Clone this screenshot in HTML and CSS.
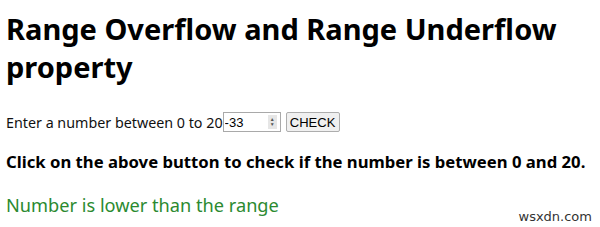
FILE: index.html
```html
<!DOCTYPE html>
<html lang="en">
<head>
    <meta charset="UTF-8">
    <title>Range Overflow and Range Underflow property</title>
    <link rel="stylesheet" href="styles.css">
</head>
<body>
    <h1>Range Overflow and Range Underflow property</h1>
    <div class="row">
        <span>Enter a number between 0 to 20</span>
        <span class="num-box">
            <input type="number" id="num" min="0" max="20" value="-33">
            <span class="spin"><i>&#9650;</i><i>&#9660;</i></span>
        </span>
        <button class="check-btn" onclick="checkNum()">CHECK</button>
    </div>
    <h3>Click on the above button to check if the number is between 0 and 20.</h3>
    <div id="result" class="result">Number is lower than the range</div>
    <div class="mark">wsxdn.com</div>

    <script>
        function checkNum() {
            const el = document.getElementById('num');
            const res = document.getElementById('result');
            if (el.validity.rangeUnderflow) {
                res.textContent = 'Number is lower than the range';
            } else if (el.validity.rangeOverflow) {
                res.textContent = 'Number is higher than the range';
            } else {
                res.textContent = 'Number is in the range';
            }
        }
    </script>
</body>
</html>
```

FILE: styles.css
```css
body {
    font-family: 'Noto Sans', sans-serif;
    margin: 8px 6px;
    color: #000;
    background: #fff;
}

h1 {
    font-size: 29px;
    line-height: 38px;
    margin: 2px 0 26px;
    font-weight: bold;
}

.row {
    display: flex;
    align-items: center;
    height: 20px;
    font-size: 14.3px;
    color: #111;
}

.num-box {
    display: flex;
    align-items: center;
    width: 56px;
    height: 18px;
    border: 1px solid #a9a9a9;
    background: #fff;
}

.num-box input {
    width: 40px;
    border: none;
    outline: none;
    padding: 0 0 0 1px;
    font-family: 'Liberation Sans', sans-serif;
    font-size: 13px;
    -moz-appearance: textfield;
}

.num-box input::-webkit-inner-spin-button,
.num-box input::-webkit-outer-spin-button {
    -webkit-appearance: none;
    margin: 0;
}

.spin {
    display: flex;
    flex-direction: column;
    justify-content: center;
    align-items: center;
    width: 9px;
    height: 14px;
    margin-left: 3px;
    background: #e6e6e6;
}

.spin i {
    font-style: normal;
    font-size: 5px;
    line-height: 5px;
    color: #555;
}

.check-btn {
    margin-left: 5px;
    height: 20px;
    width: 54px;
    padding: 0;
    font-family: 'Liberation Sans', sans-serif;
    font-size: 13px;
    color: #000;
    background: #f0f0f0;
    border: 1px solid #adadad;
    border-radius: 2px;
}

h3 {
    font-size: 16.7px;
    line-height: 20px;
    margin: 20px 0 22px;
}

.result {
    font-size: 18.2px;
    line-height: 22px;
    color: #2b8a30;
}

.mark {
    position: absolute;
    right: 8px;
    bottom: 3px;
    font-family: 'DejaVu Sans', sans-serif;
    font-size: 13px;
    color: #333;
}
```
